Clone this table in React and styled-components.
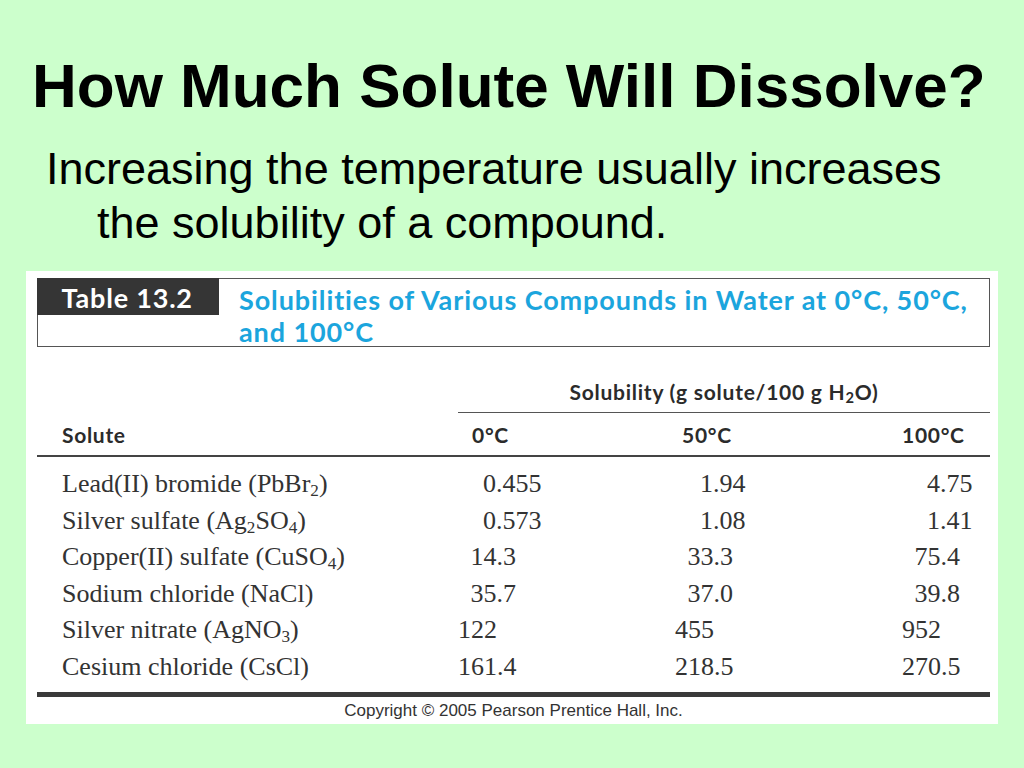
import React from 'react'
import styled, { createGlobalStyle } from 'styled-components'

// "_" marks the digit that follows as a subscript
const rows = [
  { name: 'Lead(II) bromide (PbBr_2)', values: ['0.455', '1.94', '4.75'] },
  { name: 'Silver sulfate (Ag_2SO_4)', values: ['0.573', '1.08', '1.41'] },
  { name: 'Copper(II) sulfate (CuSO_4)', values: ['14.3', '33.3', '75.4'] },
  { name: 'Sodium chloride (NaCl)', values: ['35.7', '37.0', '39.8'] },
  { name: 'Silver nitrate (AgNO_3)', values: ['122', '455', '952'] },
  { name: 'Cesium chloride (CsCl)', values: ['161.4', '218.5', '270.5'] },
]

// how far a value is pushed in so the integer parts line up
const digitPad = (v) => (3 - v.split('.')[0].length) * 12.5

const Formula = ({ text }) => {
  const parts = text.split('_')
  return (
    <>
      {parts.map((part, i) =>
        i === 0 ? (
          <React.Fragment key={i}>{part}</React.Fragment>
        ) : (
          <React.Fragment key={i}>
            <Sub>{part[0]}</Sub>
            {part.slice(1)}
          </React.Fragment>
        )
      )}
    </>
  )
}

const App = () => {
  return (
    <>
      <GlobalStyle />
      <Slide>
        <Title>How Much Solute Will Dissolve?</Title>
        <Bullet>Increasing the temperature usually increases the solubility of a compound.</Bullet>
        <Panel>
          <Caption>
            <Tag>Table 13.2</Tag>
            <CaptionText>
              Solubilities of Various Compounds in Water at 0°C, 50°C,
              <br />
              and 100°C
            </CaptionText>
          </Caption>
          <Row>
            <SpanHead>
              <span>Solubility (g solute/100 g H<HeadSub>2</HeadSub>O)</span>
            </SpanHead>
          </Row>
          <HeadRow>
            <HeadCell $indent={25}>Solute</HeadCell>
            <HeadCell $indent={14}>0°C</HeadCell>
            <HeadCell $indent={7}>50°C</HeadCell>
            <HeadCell $indent={0}>100°C</HeadCell>
          </HeadRow>
          <Body>
            {rows.map((row) => (
              <Row key={row.name}>
                <NameCell>
                  <Formula text={row.name} />
                </NameCell>
                {row.values.map((v, i) => (
                  <ValueCell key={i} $pad={digitPad(v)}>{v}</ValueCell>
                ))}
              </Row>
            ))}
          </Body>
          <Rule />
          <Copyright>Copyright © 2005 Pearson Prentice Hall, Inc.</Copyright>
        </Panel>
      </Slide>
    </>
  )
}

const GlobalStyle = createGlobalStyle`
  html, body {
    margin: 0;
    padding: 0;
    background: #ccffcc;
  }
  * {
    box-sizing: border-box;
  }
`

const Slide = styled.main`
  width: 1024px;
  height: 768px;
  overflow: hidden;
  background: #ccffcc;
  display: flex;
  flex-direction: column;
  font-family: "Liberation Sans", Arial, sans-serif;
  color: #000;
`

const Title = styled.h1`
  margin: 55px 0 0 0;
  padding-left: 32px;
  font-size: 62px;
  line-height: 62px;
  font-weight: 700;
  white-space: nowrap;
`

const Bullet = styled.p`
  margin: 25px 0 0 0;
  padding-left: 97px;
  text-indent: -51px;
  width: 965px;
  font-size: 45px;
  line-height: 54px;
`

const Panel = styled.section`
  margin: 21px 0 0 26px;
  width: 972px;
  background: #fff;
  padding: 7px 8px 4px 11px;
  font-family: Lato, "Open Sans", sans-serif;
`

const Caption = styled.div`
  display: grid;
  grid-template-columns: 181px 1fr;
  align-items: start;
  height: 69px;
  border: 1.5px solid #555;
`

const Tag = styled.div`
  height: 37px;
  margin: -1.5px 0 0 -1.5px;
  padding: 4px 0 0 25px;
  background: #353535;
  color: #fff;
  font-size: 27px;
  line-height: 32px;
  font-weight: 700;
  letter-spacing: 0.8px;
  white-space: nowrap;
`

const CaptionText = styled.div`
  padding: 5px 0 0 20px;
  color: #1ba5dd;
  font-size: 27px;
  line-height: 32px;
  font-weight: 700;
  letter-spacing: 0.9px;
  white-space: nowrap;
`

const Row = styled.div`
  display: grid;
  grid-template-columns: 421px 217px 227px 88px;
`

const SpanHead = styled.div`
  grid-column: 2 / 5;
  height: 66px;
  display: flex;
  align-items: flex-end;
  justify-content: center;
  padding-bottom: 8px;
  border-bottom: 1.5px solid #555;
  color: #2b2b2b;
  font-size: 21px;
  line-height: 24px;
  font-weight: 700;
  letter-spacing: 0.75px;
  white-space: nowrap;
`

const HeadSub = styled.sub`
  font-size: 0.7em;
  vertical-align: -0.2em;
  line-height: 0;
`

const HeadRow = styled(Row)`
  height: 44px;
  border-bottom: 2px solid #444;
`

const HeadCell = styled.div`
  display: flex;
  align-items: flex-end;
  padding: 0 0 8px ${(p) => p.$indent}px;
  color: #2b2b2b;
  font-size: 21px;
  line-height: 24px;
  font-weight: 700;
  letter-spacing: 0.7px;
  white-space: nowrap;
`

const Body = styled.div`
  padding-top: 9px;
  font-family: "Liberation Serif", "Times New Roman", serif;
  color: #333;
  font-size: 26px;
`

const NameCell = styled.div`
  height: 36.5px;
  line-height: 36.5px;
  padding-left: 25px;
  white-space: nowrap;
`

const Sub = styled.sub`
  font-size: 0.66em;
  vertical-align: -0.25em;
  line-height: 0;
`

const ValueCell = styled.div`
  height: 36.5px;
  line-height: 36.5px;
  padding-left: ${(p) => p.$pad}px;
  white-space: nowrap;
`

const Rule = styled.div`
  margin-top: 7px;
  height: 5px;
  background: #3a3a3a;
`

const Copyright = styled.div`
  margin-top: 4px;
  text-align: center;
  font-family: "Liberation Sans", Arial, sans-serif;
  font-size: 17px;
  line-height: 19px;
  color: #333;
`

export default App
